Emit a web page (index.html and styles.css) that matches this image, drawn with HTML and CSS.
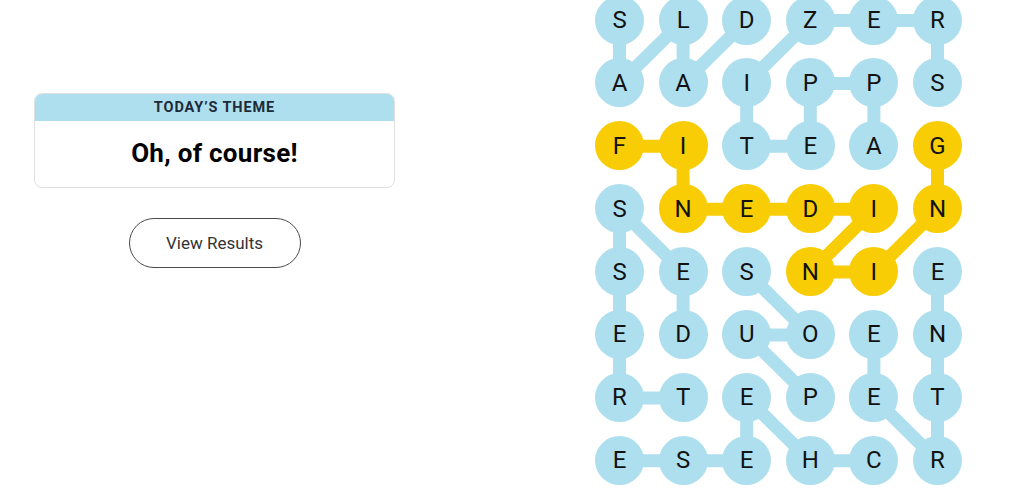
FILE: index.html
```html
<!DOCTYPE html>
<html lang="en">
<head>
    <meta charset="UTF-8">
    <title>Strands</title>
    <link rel="stylesheet" href="styles.css">
</head>
<body>
    <div class="page">
        <div class="sidePanel">
            <div class="themeCard">
                <div class="themeHeader">Today&rsquo;s Theme</div>
                <div class="themeText">Oh, of course!</div>
            </div>
            <button class="resultsBtn">View Results</button>
        </div>

        <div class="board">
            <!-- word paths, drawn under the letters -->
            <svg class="paths" width="367" height="490" viewBox="0 0 367 490">
                <g class="found">
                    <polyline points="24.5,24.5 24.5,87.4 88.1,24.5 88.1,87.4 151.7,24.5"/>
                    <polyline points="278.9,150.3 278.9,87.4 215.3,87.4 215.3,150.3 151.7,150.3 151.7,87.4 215.3,24.5 278.9,24.5 342.5,24.5 342.5,87.4"/>
                    <polyline points="88.1,339 88.1,276.1 24.5,213.2 24.5,276.1 24.5,339 24.5,401.9 88.1,401.9"/>
                    <polyline points="342.5,276.1 342.5,339 342.5,401.9 342.5,464.8 278.9,401.9 278.9,339"/>
                    <polyline points="278.9,464.8 215.3,464.8 151.7,401.9 151.7,464.8 88.1,464.8 24.5,464.8"/>
                    <polyline points="151.7,276.1 215.3,339 151.7,339 215.3,401.9"/>
                </g>
                <polyline class="spangram" points="24.5,150.3 88.1,150.3 88.1,213.2 151.7,213.2 215.3,213.2 278.9,213.2 215.3,276.1 278.9,276.1 342.5,213.2 342.5,150.3"/>
            </svg>

            <div class="letter">S</div><div class="letter">L</div><div class="letter">D</div><div class="letter">Z</div><div class="letter">E</div><div class="letter">R</div>
            <div class="letter">A</div><div class="letter">A</div><div class="letter">I</div><div class="letter">P</div><div class="letter">P</div><div class="letter">S</div>
            <div class="letter span">F</div><div class="letter span">I</div><div class="letter">T</div><div class="letter">E</div><div class="letter">A</div><div class="letter span">G</div>
            <div class="letter">S</div><div class="letter span">N</div><div class="letter span">E</div><div class="letter span">D</div><div class="letter span">I</div><div class="letter span">N</div>
            <div class="letter">S</div><div class="letter">E</div><div class="letter">S</div><div class="letter span">N</div><div class="letter span">I</div><div class="letter">E</div>
            <div class="letter">E</div><div class="letter">D</div><div class="letter">U</div><div class="letter">O</div><div class="letter">E</div><div class="letter">N</div>
            <div class="letter">R</div><div class="letter">T</div><div class="letter">E</div><div class="letter">P</div><div class="letter">E</div><div class="letter">T</div>
            <div class="letter">E</div><div class="letter">S</div><div class="letter">E</div><div class="letter">H</div><div class="letter">C</div><div class="letter">R</div>
        </div>
    </div>
</body>
</html>
```

FILE: styles.css
```css
body {
    margin: 0;
    background-color: #fff;
    font-family: 'Roboto', 'Liberation Sans', sans-serif;
    color: #121212;
    overflow: hidden;
}

.page {
    display: flex;
    align-items: flex-start;
    height: 489px;
}

.sidePanel {
    width: 361px;
    padding: 93px 34px 0 34px;
    display: flex;
    flex-direction: column;
    align-items: center;
}

.themeCard {
    width: 100%;
    border: 1px solid #e0e0e0;
    border-radius: 8px;
    overflow: hidden;
    box-sizing: border-box;
}

.themeHeader {
    background-color: #aedfee;
    height: 27px;
    line-height: 28px;
    text-align: center;
    text-transform: uppercase;
    font-size: 14.5px;
    font-weight: 700;
    letter-spacing: 0.9px;
    color: #1d2b38;
}

.themeText {
    height: 66px;
    line-height: 64px;
    text-align: center;
    font-size: 26px;
    font-weight: 700;
    color: #000;
    letter-spacing: 0.3px;
}

.resultsBtn {
    margin-top: 30px;
    width: 172px;
    height: 50px;
    border: 1.5px solid #4a4a4a;
    border-radius: 25px;
    background-color: #fff;
    font-family: 'Roboto', 'Liberation Sans', sans-serif;
    font-size: 17px;
    color: #333;
    cursor: pointer;
}

.board {
    position: relative;
    margin-left: 166px;
    margin-top: -4.5px;
    display: grid;
    grid-template-columns: repeat(6, 49px);
    grid-auto-rows: 49px;
    column-gap: 14.6px;
    row-gap: 13.9px;
}

.paths {
    position: absolute;
    top: 0;
    left: 0;
    z-index: 0;
}

.paths polyline {
    fill: none;
    stroke-width: 13;
    stroke-linejoin: round;
    stroke-linecap: round;
}

.paths .found polyline {
    stroke: #aedfee;
}

.paths .spangram {
    stroke: #f8cd05;
}

.letter {
    position: relative;
    z-index: 1;
    width: 49px;
    height: 49px;
    border-radius: 50%;
    background-color: #aedfee;
    display: flex;
    align-items: center;
    justify-content: center;
    font-size: 24px;
    color: #121212;
}

.letter.span {
    background-color: #f8cd05;
}
```
